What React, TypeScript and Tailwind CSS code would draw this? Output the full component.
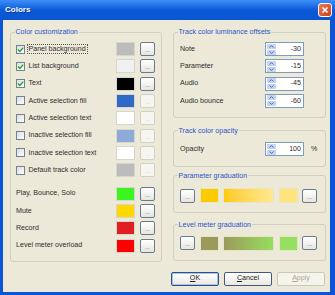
const font = "font-['Liberation_Sans',Arial,sans-serif]";

type SwatchRow = { label: string; swatch: string; checked?: boolean; focus?: boolean };

const overrideRows: SwatchRow[] = [
  { label: "Panel background", swatch: "bg-[#bcbcbc]", checked: true, focus: true },
  { label: "List background", swatch: "bg-[#f1f1f1]", checked: true },
  { label: "Text", swatch: "bg-[#000000]", checked: true },
  { label: "Active selection fill", swatch: "bg-[#3169c6]" },
  { label: "Active selection text", swatch: "bg-[#ffffff]" },
  { label: "Inactive selection fill", swatch: "bg-[#8eaad6]" },
  { label: "Inactive selection text", swatch: "bg-[#ffffff]" },
  { label: "Default track color", swatch: "bg-[#bcbcbc]" },
];

const stateRows: SwatchRow[] = [
  { label: "Play, Bounce, Solo", swatch: "bg-[#3cf51e]" },
  { label: "Mute", swatch: "bg-[#ffd800]" },
  { label: "Record", swatch: "bg-[#e02020]" },
  { label: "Level meter overload", swatch: "bg-[#ff0000]" },
];

const offsets = [
  { label: "Note", value: "-30" },
  { label: "Parameter", value: "-15" },
  { label: "Audio", value: "-45" },
  { label: "Audio bounce", value: "-60" },
];

function DotsButton({ disabled = false }: { disabled?: boolean }) {
  return (
    <button
      type="button"
      className={
        disabled
          ? "flex h-[14px] w-[15px] items-end justify-center rounded-[2px] border border-[#d3d1c4] bg-[#f6f5f0] pb-[2px] text-[6px] leading-none text-[#c8c6b8]"
          : "flex h-[14px] w-[15px] items-end justify-center rounded-[2px] border border-[#6a7a90] bg-gradient-to-b from-white to-[#e6e5de] pb-[2px] text-[6px] leading-none text-[#606060]"
      }
    >
      ...
    </button>
  );
}

function CheckBox({ checked }: { checked?: boolean }) {
  return (
    <span className="flex h-[9px] w-[9px] shrink-0 items-center justify-center border border-[#6f8299] bg-gradient-to-br from-[#dddcd5] to-white">
      {checked && (
        <svg viewBox="0 0 7 7" className="h-[7px] w-[7px]">
          <path d="M1 3.4 L2.9 5.4 L6.2 1.6" stroke="#22a022" strokeWidth="1.4" fill="none" />
        </svg>
      )}
    </span>
  );
}

function ColorRow({ row, withCheck }: { row: SwatchRow; withCheck: boolean }) {
  const enabled = !withCheck || row.checked;
  return (
    <div className="flex h-[14px] items-center">
      {withCheck && <CheckBox checked={row.checked} />}
      <span
        className={
          row.focus
            ? "ml-[1.5px] border border-dotted border-[#555] px-[1px] leading-[8px]"
            : withCheck
              ? "ml-[2.5px] px-[1px]"
              : ""
        }
      >
        {row.label}
      </span>
      <span className={`ml-auto h-[14px] w-[19px] border border-[#d6d6d0] ${row.swatch}`} />
      <span className="ml-[5px]">
        <DotsButton disabled={!enabled} />
      </span>
    </div>
  );
}

function Spin({ value }: { value: string }) {
  return (
    <div className="flex h-[14px] w-[39px] items-center border border-[#7f9db9] bg-white pl-[1px] pr-[2px]">
      <div className="flex flex-col gap-[1px]">
        <span className="flex h-[5px] w-[9px] items-center justify-center rounded-[1px] bg-[#c4d4f6]">
          <svg viewBox="0 0 5 3" className="h-[3px] w-[5px]">
            <path d="M0.5 2.6 L2.5 0.6 L4.5 2.6" stroke="#4a5f8c" strokeWidth="0.9" fill="none" />
          </svg>
        </span>
        <span className="flex h-[5px] w-[9px] items-center justify-center rounded-[1px] bg-[#c4d4f6]">
          <svg viewBox="0 0 5 3" className="h-[3px] w-[5px]">
            <path d="M0.5 0.4 L2.5 2.4 L4.5 0.4" stroke="#4a5f8c" strokeWidth="0.9" fill="none" />
          </svg>
        </span>
      </div>
      <span className="ml-auto">{value}</span>
    </div>
  );
}

function Legend({ children }: { children: string }) {
  return <legend className="ml-[3.5px] px-[1px] leading-[8px] text-[#2a54c9]">{children}</legend>;
}

function Graduation({ left, middle, right }: { left: string; middle: string; right: string }) {
  return (
    <div className="flex h-[15px] items-center gap-[4.5px] pl-[6px]">
      <DotsButton />
      <span className={`h-[15px] w-[19px] border border-[#e8e4c8] ${left}`} />
      <span className={`h-[15px] w-[51px] border border-[#e8e4c8] ${middle}`} />
      <span className={`h-[15px] w-[19px] border border-[#e8e4c8] ${right}`} />
      <DotsButton />
    </div>
  );
}

function DialogButton({ label, mnemonic, variant }: { label: string; mnemonic: string; variant: "default" | "normal" | "disabled" }) {
  const rest = label.slice(mnemonic.length);
  const base = "flex h-[14px] w-[48px] items-center justify-center rounded-[2px] border leading-none";
  const look =
    variant === "disabled"
      ? "border-[#cac8bb] bg-[#f5f4ea] text-[#aca899]"
      : variant === "default"
        ? "border-[#2b4f86] bg-gradient-to-b from-white to-[#e9e8e0] text-[#222] shadow-[inset_0_0_0_1px_#a8c4ee]"
        : "border-[#3f5a7e] bg-gradient-to-b from-white to-[#e9e8e0] text-[#222]";
  return (
    <button type="button" className={`${base} ${look}`}>
      <span className="underline underline-offset-1">{mnemonic}</span>
      {rest}
    </button>
  );
}

export default function App() {
  return (
    <div className={`flex h-[295px] w-[335px] flex-col text-[7.1px] text-[#2e2e2e] ${font}`}>
      <div className="flex h-[20px] shrink-0 items-center justify-between bg-gradient-to-b from-[#3d8ef8] via-[#0b5ad9] to-[#0a54d0] pl-[5px] pr-[3px]">
        <span className="text-[8px] font-bold text-white [text-shadow:1px_1px_0_#0a3a9a]">Colors</span>
        <span className="flex h-[14px] w-[14px] items-center justify-center rounded-[3px] border border-white bg-gradient-to-br from-[#ea7a58] to-[#cd3c12]">
          <svg viewBox="0 0 8 8" className="h-[8px] w-[8px]">
            <path d="M1.5 1.5 L6.5 6.5 M6.5 1.5 L1.5 6.5" stroke="white" strokeWidth="1.6" />
          </svg>
        </span>
      </div>

      <div className="flex flex-1 flex-col border-b-[3px] border-l-[3px] border-r-[5px] border-[#0b55d6] bg-[#ece9d8] pl-[7px] pr-[4px] pt-[8px]">
        <div className="flex gap-[11px]">
          <fieldset className="h-[234px] w-[152px] rounded-[3px] border border-[#d0d0bf]">
            <Legend>Color customization</Legend>
            <div className="mt-[6px] flex flex-col gap-[3.33px] pl-[5px] pr-[6px]">
              {overrideRows.map((r) => (
                <ColorRow key={r.label} row={r} withCheck />
              ))}
            </div>
            <div className="mt-[9.4px] flex flex-col gap-[3.33px] pl-[5px] pr-[6px]">
              {stateRows.map((r) => (
                <ColorRow key={r.label} row={r} withCheck={false} />
              ))}
            </div>
          </fieldset>

          <div className="flex w-[153px] flex-col">
            <fieldset className="h-[90px] rounded-[3px] border border-[#d0d0bf]">
              <Legend>Track color luminance offsets</Legend>
              <div className="mt-[6px] flex flex-col gap-[3.33px] pl-[6px]">
                {offsets.map((o) => (
                  <div key={o.label} className="flex h-[14px] items-center">
                    <span className="w-[85px]">{o.label}</span>
                    <Spin value={o.value} />
                  </div>
                ))}
              </div>
            </fieldset>

            <fieldset className="mt-[8.7px] h-[40px] rounded-[3px] border border-[#d0d0bf]">
              <Legend>Track color opacity</Legend>
              <div className="mt-[7.6px] flex h-[14px] items-center pl-[6px]">
                <span className="w-[85px]">Opacity</span>
                <Spin value="100" />
                <span className="ml-[7px]">%</span>
              </div>
            </fieldset>

            <fieldset className="mt-[5px] h-[41px] rounded-[3px] border border-[#d0d0bf]">
              <Legend>Parameter graduation</Legend>
              <div className="mt-[8.6px]">
                <Graduation
                  left="bg-[#fdca00]"
                  middle="bg-gradient-to-r from-[#fdca00] to-[#ffe98e]"
                  right="bg-[#ffe47c]"
                />
              </div>
            </fieldset>

            <fieldset className="mt-[8.3px] h-[40px] rounded-[3px] border border-[#d0d0bf]">
              <Legend>Level meter graduation</Legend>
              <div className="mt-[7px]">
                <Graduation
                  left="bg-[#9b9a5b]"
                  middle="bg-gradient-to-r from-[#9b9a5b] to-[#93de5e]"
                  right="bg-[#95e060]"
                />
              </div>
            </fieldset>
          </div>
        </div>

        <div className="mr-[1px] mt-[9.7px] flex justify-end gap-[5px]">
          <DialogButton label="OK" mnemonic="O" variant="default" />
          <DialogButton label="Cancel" mnemonic="C" variant="normal" />
          <DialogButton label="Apply" mnemonic="A" variant="disabled" />
        </div>
      </div>
    </div>
  );
}
